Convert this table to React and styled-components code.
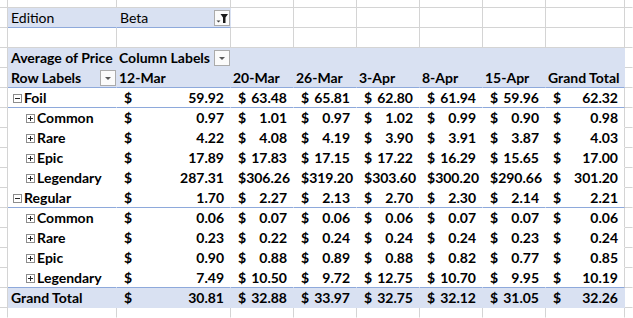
import React from "react";
import styled, { createGlobalStyle } from "styled-components";

const colors = {
  grid: "#d4d4d4",
  rule: "#8ea9db",
  band: "#d9e1f2",
  text: "#000000",
  button: "#ababab",
  glyph: "#404040",
};

const GlobalStyle = createGlobalStyle`
  html, body {
    margin: 0;
    padding: 0;
    background: #fff;
    overflow: hidden;
  }
  body {
    font-family: Lato, "Liberation Sans", sans-serif;
    font-size: 14px;
    color: ${colors.text};
  }
`;

const Sheet = styled.div`
  display: grid;
  grid-template-columns: 8px 109px 114px repeat(5, 63px) 79px 1fr;
  grid-template-rows: 8px repeat(15, 20px) 1fr;
  width: 633px;
  height: 318px;
`;

const lineColor = (v) =>
  v === "grid" ? colors.grid : v === "rule" ? colors.rule : "transparent";

const Cell = styled.div`
  box-sizing: border-box;
  min-width: 0;
  display: flex;
  align-items: center;
  border-right: 1px solid ${(p) => lineColor(p.$right)};
  border-bottom: 1px solid ${(p) => lineColor(p.$bottom)};
  background: ${(p) => (p.$band ? colors.band : "#fff")};
  font-weight: ${(p) => (p.$bold ? 700 : 400)};
  line-height: 19px;
  white-space: nowrap;
  padding-left: ${(p) => p.$indent ?? 2}px;
`;

const Money = styled(Cell)`
  justify-content: space-between;
  padding: 0 6px 0 7px;
`;

const FilterCell = styled(Cell)`
  justify-content: space-between;
`;

const DropButton = styled.span`
  box-sizing: border-box;
  width: 16px;
  height: 16px;
  flex: none;
  border: 1px solid ${colors.button};
  background: #fbfbfb;
  display: flex;
  & > svg {
    display: block;
  }
`;

const ToggleBox = styled.svg`
  flex: none;
  margin-top: 2px;
  margin-right: 2px;
`;

function Toggle({ open }) {
  return (
    <ToggleBox width="9" height="9" viewBox="0 0 9 9">
      <rect x="0.5" y="0.5" width="8" height="8" fill="#fff" stroke="#8c8c8c" />
      <rect x="2" y="4" width="5" height="1" fill="#262626" />
      {!open && <rect x="4" y="2" width="1" height="5" fill="#262626" />}
    </ToggleBox>
  );
}

function Drop({ filtered }) {
  return (
    <DropButton>
      {filtered ? (
        <svg width="14" height="14" viewBox="0 0 14 14">
          <polygon points="1.5,9.5 5.5,9.5 3.5,11.5" fill={colors.glyph} />
          <polygon points="5.5,3 13,3 10.5,6.5 10.5,12 8,12 8,6.5" fill="#1a1a1a" />
        </svg>
      ) : (
        <svg width="14" height="14" viewBox="0 0 14 14">
          <polygon points="4,6 10,6 7,9" fill="#5a5a5a" />
        </svg>
      )}
    </DropButton>
  );
}

const dates = ["12-Mar", "20-Mar", "26-Mar", "3-Apr", "8-Apr", "15-Apr", "Grand Total"];

const body = [
  { kind: "group", label: "Foil", values: ["59.92", "63.48", "65.81", "62.80", "61.94", "59.96", "62.32"] },
  { kind: "item", label: "Common", values: ["0.97", "1.01", "0.97", "1.02", "0.99", "0.90", "0.98"] },
  { kind: "item", label: "Rare", values: ["4.22", "4.08", "4.19", "3.90", "3.91", "3.87", "4.03"] },
  { kind: "item", label: "Epic", values: ["17.89", "17.83", "17.15", "17.22", "16.29", "15.65", "17.00"] },
  { kind: "item", label: "Legendary", values: ["287.31", "306.26", "319.20", "303.60", "300.20", "290.66", "301.20"] },
  { kind: "group", label: "Regular", values: ["1.70", "2.27", "2.13", "2.70", "2.30", "2.14", "2.21"] },
  { kind: "item", label: "Common", values: ["0.06", "0.07", "0.06", "0.06", "0.07", "0.07", "0.06"] },
  { kind: "item", label: "Rare", values: ["0.23", "0.22", "0.24", "0.24", "0.24", "0.23", "0.24"] },
  { kind: "item", label: "Epic", values: ["0.90", "0.88", "0.89", "0.88", "0.82", "0.77", "0.85"] },
  { kind: "item", label: "Legendary", values: ["7.49", "10.50", "9.72", "12.75", "10.70", "9.95", "10.19"], last: true },
  { kind: "total", label: "Grand Total", values: ["30.81", "32.88", "33.97", "32.75", "32.12", "31.05", "32.26"] },
];

/* the column left of the table and the one right of it */
function Edges({ children, last }) {
  return (
    <>
      <Cell $right="grid" $bottom={last ? "none" : "grid"} />
      {children}
      <Cell $bottom={last ? "none" : "grid"} />
    </>
  );
}

function BlankRow({ last }) {
  return (
    <Edges last={last}>
      {Array.from({ length: 8 }, (_, i) => (
        <Cell key={i} $right="grid" $bottom={last ? "none" : "grid"} />
      ))}
    </Edges>
  );
}

function EditionRow() {
  return (
    <Edges>
      <Cell $band $bottom="rule" $indent={3}>Edition</Cell>
      <FilterCell $band $bottom="rule" $indent={3}>
        <span>Beta</span>
        <Drop filtered />
      </FilterCell>
      {Array.from({ length: 6 }, (_, i) => (
        <Cell key={i} $right="grid" $bottom="grid" />
      ))}
    </Edges>
  );
}

function HeaderRows() {
  return (
    <>
      <Edges>
        <Cell $band $bold $indent={3}>Average of Price</Cell>
        <FilterCell $band $bold>
          <span>Column Labels</span>
          <Drop />
        </FilterCell>
        {Array.from({ length: 6 }, (_, i) => (
          <Cell key={i} $band />
        ))}
      </Edges>
      <Edges>
        <FilterCell $band $bold $bottom="rule" $indent={3}>
          <span>Row Labels</span>
          <Drop />
        </FilterCell>
        {dates.map((d) => (
          <Cell key={d} $band $bold $bottom="rule">
            {d}
          </Cell>
        ))}
      </Edges>
    </>
  );
}

function BodyRow({ row }) {
  const band = row.kind === "total";
  const bottom = row.kind === "group" || row.last ? "rule" : "none";
  const indent = row.kind === "group" ? 5 : row.kind === "item" ? 18 : 3;
  return (
    <Edges>
      <Cell $band={band} $bold $bottom={bottom} $indent={indent}>
        {row.kind !== "total" && <Toggle open={row.kind === "group"} />}
        {row.label}
      </Cell>
      {row.values.map((v, i) => (
        <Money
          key={i}
          $band={band}
          $bold
          $bottom={bottom}
          $right={i === 6 && !band ? "grid" : "none"}
        >
          <span>$</span>
          <span>{v}</span>
        </Money>
      ))}
    </Edges>
  );
}

export default function App() {
  return (
    <>
      <GlobalStyle />
      <Sheet>
        <BlankRow />
        <EditionRow />
        <BlankRow />
        <HeaderRows />
        {body.map((row, i) => (
          <BodyRow key={i} row={row} />
        ))}
        <BlankRow last />
      </Sheet>
    </>
  );
}
